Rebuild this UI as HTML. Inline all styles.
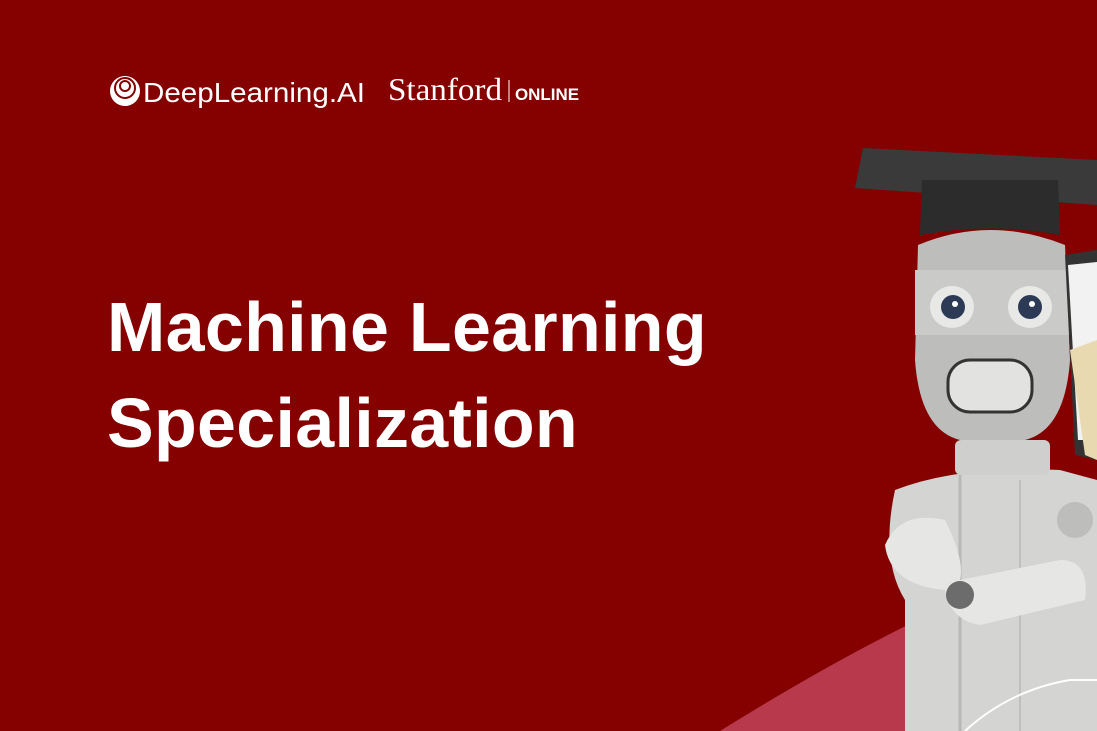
<!DOCTYPE html>
<html><head><meta charset="utf-8"><style>
html,body{margin:0;padding:0}
body{width:1097px;height:731px;overflow:hidden;background:#850100;position:relative;font-family:"Liberation Sans",sans-serif}
.t{position:absolute;left:107px;color:#fff;font-weight:bold;font-size:70px;letter-spacing:0.3px;line-height:1}
</style></head><body>
<svg width="1097" height="731" style="position:absolute;left:0;top:0">
<path d="M720,731 Q850,650 960,600 Q1030,575 1097,560 L1097,731Z" fill="#b9394c"/>
<path d="M895,490 Q960,465 1060,470 L1097,480 L1097,731 L905,731 L905,600 Q880,560 895,490Z" fill="#d4d4d2"/>
<path d="M960,470 L960,731" stroke="#b8b8b6" stroke-width="3"/>
<path d="M1020,480 L1020,731" stroke="#c0c0be" stroke-width="2"/>
<path d="M885,545 Q900,510 945,520 Q965,560 960,580 L1060,560 Q1090,560 1085,600 L980,625 Q950,620 945,590 Q890,585 885,545Z" fill="#e6e6e4"/>
<circle cx="960" cy="595" r="14" fill="#6c6c6c"/>
<circle cx="1075" cy="520" r="18" fill="#bdbdbb"/>
<rect x="955" y="440" width="95" height="35" rx="6" fill="#cfcfcd"/>
<path d="M918,245 Q990,215 1065,245 L1070,360 Q1065,430 1025,440 L960,440 Q920,430 915,360Z" fill="#bdbdbb"/>
<path d="M915,270 L1070,270 L1070,335 L915,335Z" fill="#cacac8"/>
<ellipse cx="952" cy="307" rx="22" ry="21" fill="#e8e8e6"/>
<ellipse cx="1030" cy="307" rx="22" ry="21" fill="#e8e8e6"/>
<circle cx="953" cy="307" r="12" fill="#2d3a55"/>
<circle cx="1030" cy="307" r="12" fill="#2d3a55"/>
<circle cx="955" cy="304" r="3" fill="#fff"/>
<circle cx="1032" cy="304" r="3" fill="#fff"/>
<rect x="948" y="360" width="84" height="52" rx="22" fill="#e2e2e0" stroke="#333" stroke-width="3"/>
<path d="M863,148 L1097,160 L1097,205 L855,188Z" fill="#3a3a3a"/>
<path d="M922,180 L1058,180 L1060,235 Q990,222 920,235Z" fill="#2c2c2c"/>
<path d="M1065,255 L1097,250 L1097,460 L1075,455Z" fill="#333"/>
<path d="M1068,265 L1097,262 L1097,440 L1078,440Z" fill="#f2f2f2"/>
<path d="M1070,350 L1097,340 L1097,460 L1085,455Z" fill="#e8d9b0"/>
<path d="M965,731 Q1010,690 1070,680 L1097,680" stroke="#fff" stroke-width="2" fill="none"/>
<circle cx="125" cy="91" r="15" fill="#fff"/>
<circle cx="125" cy="88" r="10" fill="none" stroke="#850100" stroke-width="2"/>
<circle cx="125" cy="86" r="5" fill="none" stroke="#850100" stroke-width="2"/>
<text x="143" y="102" fill="#fff" font-family="Liberation Sans" font-size="28" textLength="222" lengthAdjust="spacingAndGlyphs">DeepLearning.AI</text>
<text x="388" y="100" fill="#fff" font-family="Liberation Serif" font-size="32" textLength="114" lengthAdjust="spacingAndGlyphs">Stanford</text>
<line x1="509" y1="80" x2="509" y2="102" stroke="#fff" stroke-width="1"/>
<text x="515" y="100" fill="#fff" font-family="Liberation Sans" font-weight="bold" font-size="17" textLength="64" lengthAdjust="spacingAndGlyphs">ONLINE</text>
</svg>
<div class="t" style="top:292px">Machine Learning</div>
<div class="t" style="top:388px">Specialization</div>
</body></html>
